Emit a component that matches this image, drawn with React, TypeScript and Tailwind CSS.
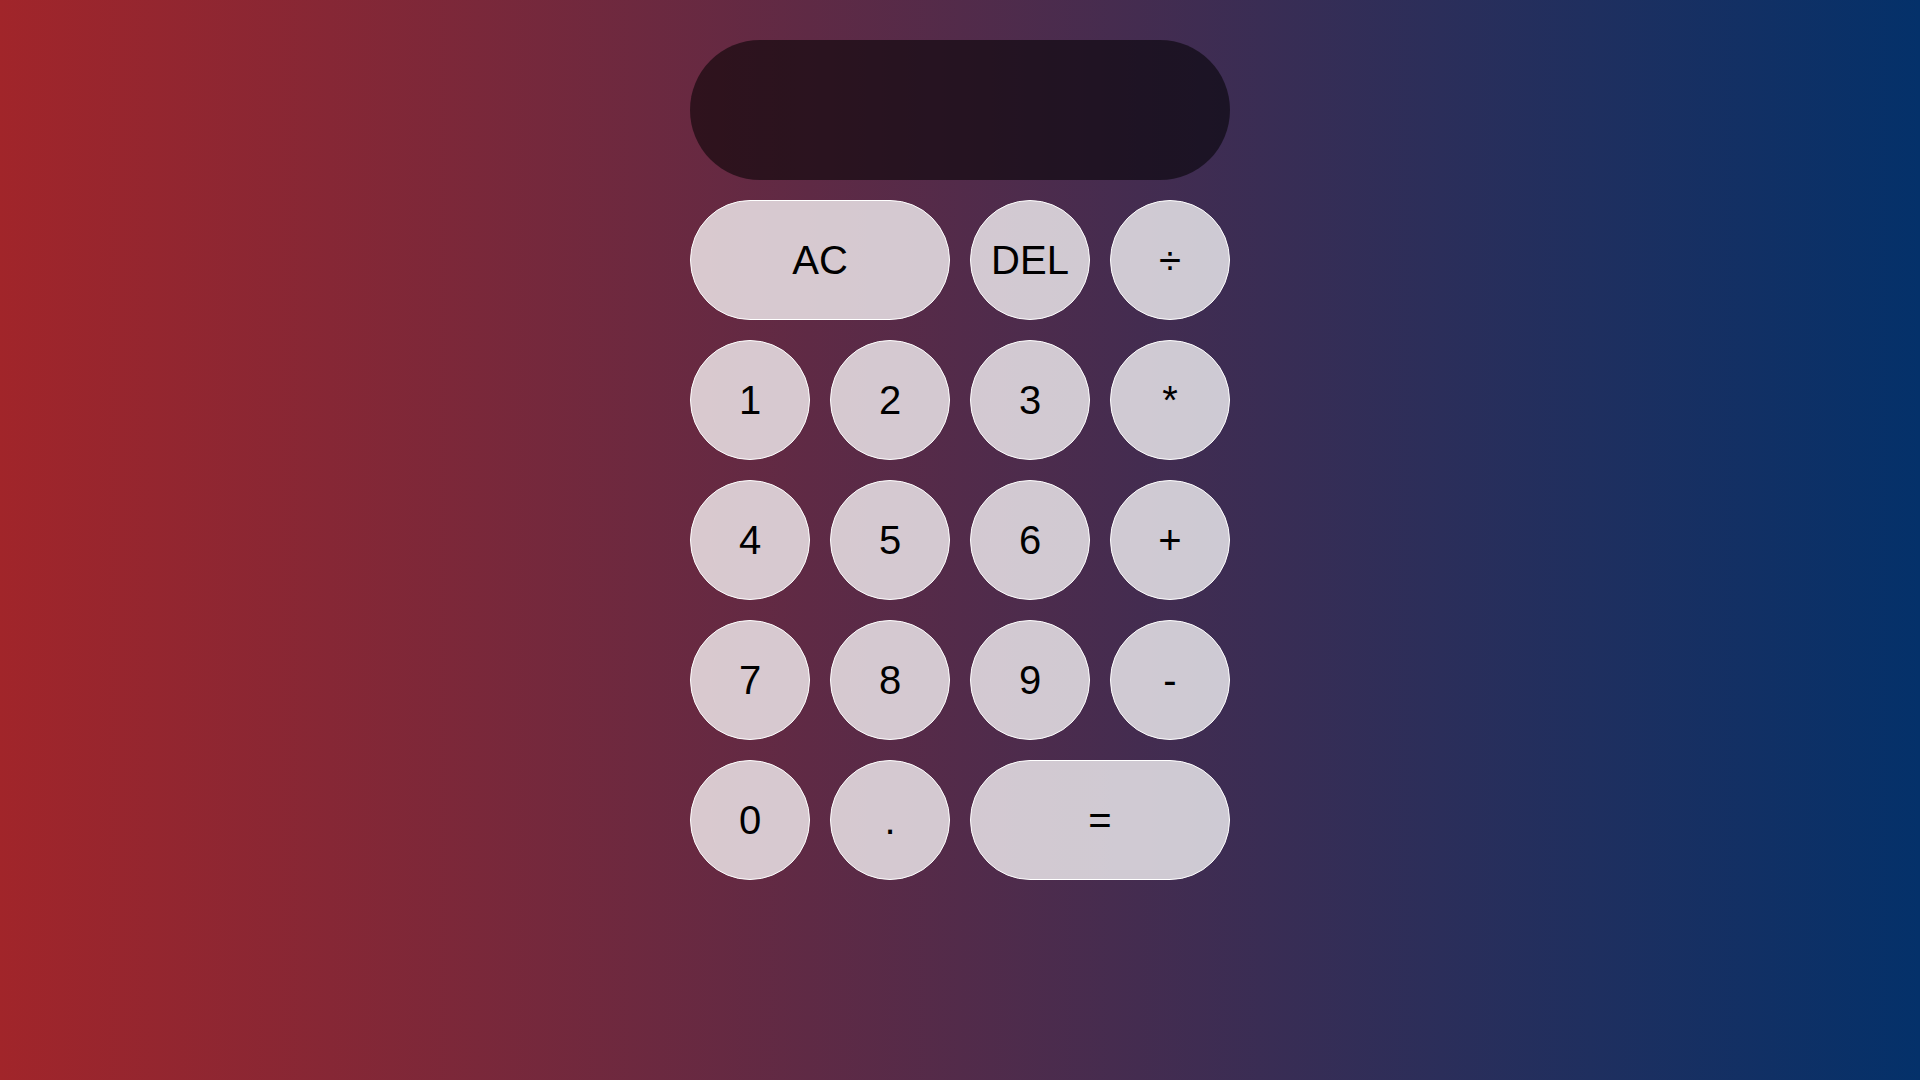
import React, { useState } from "react";

// ─── Keys ─────────────────────────────────────────────────────────────────────

const KEYS: { label: string; wide?: boolean }[] = [
  { label: "AC", wide: true },
  { label: "DEL" },
  { label: "÷" },
  { label: "1" },
  { label: "2" },
  { label: "3" },
  { label: "*" },
  { label: "4" },
  { label: "5" },
  { label: "6" },
  { label: "+" },
  { label: "7" },
  { label: "8" },
  { label: "9" },
  { label: "-" },
  { label: "0" },
  { label: "." },
  { label: "=", wide: true },
];

export default function App() {
  const [value, setValue] = useState("");

  const press = (k: string) => {
    if (k === "AC") return setValue("");
    if (k === "DEL") return setValue((v) => v.slice(0, -1));
    if (k === "=") {
      try {
        // eslint-disable-next-line no-new-func
        const r = Function(`return (${value.replace(/÷/g, "/")})`)();
        setValue(String(r));
      } catch {
        setValue("Error");
      }
      return;
    }
    setValue((v) => v + k);
  };

  return (
    <div
      className="min-h-screen w-full bg-linear-to-r/srgb from-[#a1252a] to-[#04316a] flex justify-center pt-10"
      style={{ fontFamily: '"Liberation Sans", Arial, sans-serif' }}
    >
      <div className="flex flex-col gap-5 w-[540px] h-fit">
        {/* Display */}
        <div className="h-[140px] rounded-full bg-black/55 flex items-center justify-end px-10 text-white text-5xl overflow-hidden">
          {value}
        </div>

        <div className="grid grid-cols-[repeat(4,120px)] auto-rows-[120px] gap-5">
          {KEYS.map((k) => (
            <button
              key={k.label}
              onClick={() => press(k.label)}
              className={`${
                k.wide ? "col-span-2" : ""
              } rounded-full bg-white/75 border border-white text-black text-[40px] leading-none flex items-center justify-center cursor-pointer`}
            >
              {k.label}
            </button>
          ))}
        </div>
      </div>
    </div>
  );
}
